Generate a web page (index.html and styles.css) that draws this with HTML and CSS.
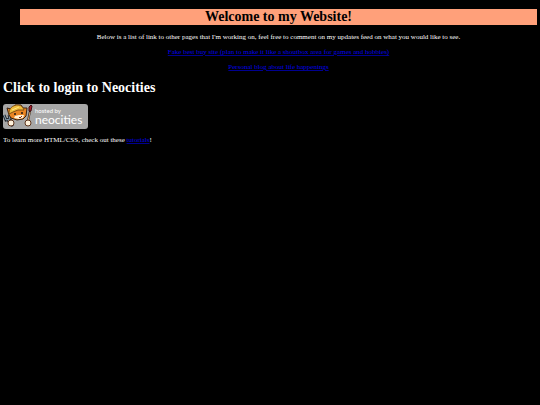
FILE: index.html
```
<!DOCTYPE html>
<html lang="en">
<head>
    <meta charset="utf-8"/>
    <title>Welcome to my Website!</title>
    <link rel="stylesheet" href="styles.css">
</head>
<body>
    <div class="intro">
        <h1 class="banner">Welcome to my Website!</h1>
        <p>Below is a list of link to other pages that I'm working on, feel free to comment on my updates feed on what you would like to see.</p>
        <p><a href="bestbuy.html">Fake best buy site (plan to make it like a shoutbox area for games and hobbies)</a></p>
        <p><a href="blog.html">Personal blog about life happenings</a></p>
    </div>

    <h1>Click to login to Neocities</h1>
    <a class="badge" href="https://neocities.org" aria-label="Hosted by Neocities">
        <svg width="85" height="25" viewBox="0 0 85 25">
            <rect width="85" height="25" rx="3" fill="#a7a7a7"/>
            <!-- fork -->
            <path d="M1 11L3 16L7 15L6 11M5 16L10 22" fill="none" stroke="#20262d" stroke-width="3"/>
            <path d="M1 11L3 16L7 15L6 11M5 16L10 22" fill="none" stroke="#8ba3b4" stroke-width="1"/>
            <!-- brush -->
            <path d="M25 17L27 7" stroke="#241b18" stroke-width="2"/>
            <path d="M25 17L27 8" stroke="#d8a064" stroke-width="1"/>
            <path d="M26 7L26 3L28 1L29 2L28 7Z" fill="#a91e2d" stroke="#421013" stroke-width="1"/>
            <!-- cat -->
            <path d="M6 11L4 4L8 5L12 1L18 1L20 4L24 4L23 12L20 15L14 16L8 14Z" fill="#e98523" stroke="#38200f" stroke-width="1"/>
            <path d="M12 12L16 11L21 11L20 14L16 15L11 14Z" fill="#fff0d5"/>
            <path d="M6 8C7 3 11 1 15 1C18 1 20 3 21 6L15 6L10 8L6 10Z" fill="#f0bd3e" stroke="#805013" stroke-width="1"/>
            <path d="M9 6L16 3" stroke="#ffe77b" stroke-width="1"/>
            <circle cx="12" cy="10" r="1" fill="#211714"/>
            <circle cx="19" cy="9" r="1" fill="#211714"/>
            <path d="M16 13L17 14L19 12" fill="none" stroke="#793022" stroke-width="1"/>
            <circle cx="8" cy="19" r="3" fill="#fff2dc" stroke="#5d351e" stroke-width="1"/>
            <circle cx="25" cy="19" r="3" fill="#fff2dc" stroke="#5d351e" stroke-width="1"/>
            <text class="badge-small" x="32" y="9">hosted by</text>
            <text class="badge-name" x="32" y="20">neocities</text>
        </svg>
    </a>
    <p>To learn more HTML/CSS, check out these <a href="https://neocities.org/tutorials">tutorials</a>!</p>
</body>
</html>
```
FILE: styles.css
```
body {
    background-color: black;
    color: white;
    font-family: "Liberation Serif", "Times New Roman", serif;
    font-size: 7px;
    line-height: 8px;
    margin: 9px 3px;
}
h1 {
    font-size: 14px;
    line-height: 16px;
    margin: 9px 0 8px;
}
p {
    margin: 7px 0;
}
a {
    color: #0000ee;
    text-decoration-color: #000090;
    text-underline-offset: 1px;
}
.intro {
    margin-left: 17px;
    text-align: center;
}
.banner {
    background-color: lightsalmon;
    color: black;
    margin-top: 0;
}
.badge {
    display: block;
    width: fit-content;
}
.badge svg {
    display: block;
}
.badge-small,
.badge-name {
    fill: white;
    font-family: Lato, sans-serif;
}
.badge-small {
    font-size: 6px;
}
.badge-name {
    font-size: 12px;
}
```
